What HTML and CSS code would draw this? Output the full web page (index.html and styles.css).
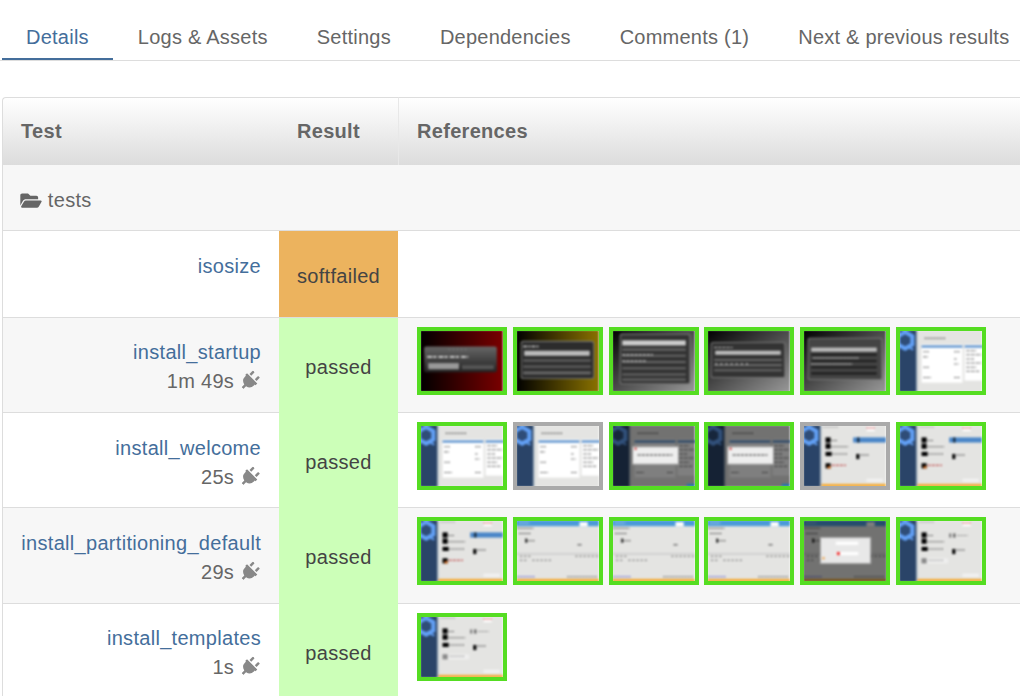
FILE: index.html
```html
<!DOCTYPE html>
<html lang="en">
<head>
    <meta charset="UTF-8">
    <title>Test details</title>
    <link rel="stylesheet" href="styles.css">
</head>
<body>

    <!-- thumbnails, all drawn once and reused -->
    <svg class="defs" width="0" height="0">
        <defs>
            <linearGradient id="g-red"><stop offset="0" stop-color="#000"/><stop offset="1" stop-color="#7c0000"/></linearGradient>
            <linearGradient id="g-yellow"><stop offset="0" stop-color="#000"/><stop offset="1" stop-color="#8c7400"/></linearGradient>
            <linearGradient id="g-grey" x2="1" y2="1"><stop offset="0" stop-color="#000"/><stop offset="1" stop-color="#9a9a9a"/></linearGradient>
            <linearGradient id="g-panel" x2="0" y2="1"><stop offset="0" stop-color="#666"/><stop offset="1" stop-color="#222"/></linearGradient>

            <g id="sidebar">
                <rect width="82" height="60" fill="#e4e4e2"/>
                <rect width="17" height="60" fill="#2a4468"/>
                <rect x="17" width="1" height="60" fill="#9ab"/>
                <path d="M6 2l7 4v8l-7 4-7-4v-8z" fill="#2f4d78" stroke="#62a0f5" stroke-width="4"/>
                <path d="M10 17l4 2" stroke="#62a0f5" stroke-width="2"/>
                <rect x="81" width="1" height="60" fill="#fff"/>
            </g>

            <symbol id="t-red" viewBox="0 0 82 60" preserveAspectRatio="none">
                <rect width="82" height="60" fill="url(#g-red)"/>
                <rect x="4" y="16" width="71" height="25" rx="2" fill="url(#g-panel)"/>
                <path d="M7 26h40" stroke="#ddd" stroke-width="1.500" stroke-dasharray="5 1 3 2"/>
                <path d="M28 19h20" stroke="#888" stroke-dasharray="1 3"/>
                <rect x="8" y="32" width="30" height="6" fill="#999"/>
                <rect x="41" y="34" width="31" height="4" fill="#555"/>
                <rect x="81" width="1" height="60" fill="#fff"/>
            </symbol>

            <symbol id="t-yellow" viewBox="0 0 82 60" preserveAspectRatio="none">
                <rect width="82" height="60" fill="url(#g-yellow)"/>
                <rect x="5" y="11" width="71" height="36" rx="2" fill="#2c2c2c" stroke="#777"/>
                <path d="M7 16h16" stroke="#ccc" stroke-width="1.500" stroke-dasharray="4 1 2 1"/>
                <rect x="8" y="20" width="64" height="5" fill="#bbb"/>
                <rect x="7" y="28" width="66" height="3" fill="#555"/>
                <rect x="7" y="34" width="66" height="3" fill="#555"/>
                <rect x="7" y="40" width="66" height="3" fill="#666"/>
                <rect x="81" width="1" height="60" fill="#fff"/>
            </symbol>

            <symbol id="t-menu" viewBox="0 0 82 60" preserveAspectRatio="none">
                <rect width="82" height="60" fill="url(#g-grey)"/>
                <rect x="8" y="4" width="68" height="48" rx="2" fill="#333" stroke="#777"/>
                <rect x="10" y="10" width="62" height="5" fill="#ccc"/>
                <path d="M10 19h62M10 25h62M10 31h62M10 37h62M10 43h62M10 48h62" stroke="#666" stroke-width="2"/>
                <path d="M10 24h30M10 30h24" stroke="#ddd" stroke-dasharray="3 1"/>
                <rect x="81" width="1" height="60" fill="#fff"/>
            </symbol>

            <symbol id="t-menu2" viewBox="0 0 82 60" preserveAspectRatio="none">
                <rect width="82" height="60" fill="url(#g-grey)"/>
                <rect x="4" y="12" width="72" height="34" rx="2" fill="#333" stroke="#777"/>
                <path d="M7 17h18" stroke="#bbb" stroke-dasharray="3 1"/>
                <rect x="8" y="20" width="64" height="4" fill="#bbb"/>
                <path d="M7 29h66M7 34h66M7 39h66" stroke="#666" stroke-width="2"/>
                <path d="M8 33h34" stroke="#eee" stroke-dasharray="2 3"/>
                <rect x="81" width="1" height="60" fill="#fff"/>
            </symbol>

            <symbol id="t-menu3" viewBox="0 0 82 60" preserveAspectRatio="none">
                <rect width="82" height="60" fill="url(#g-grey)"/>
                <rect x="5" y="8" width="72" height="40" rx="2" fill="#444" stroke="#777"/>
                <rect x="8" y="17" width="64" height="4" fill="#bbb"/>
                <path d="M8 24h64M8 30h64M8 36h64M8 42h64" stroke="#222" stroke-width="2.500"/>
                <path d="M10 27h44M8 33h40" stroke="#ddd" stroke-dasharray="2 1"/>
                <rect x="81" width="1" height="60" fill="#fff"/>
            </symbol>

            <g id="packages">
                <rect x="22" y="14" width="40" height="37" fill="#fff"/>
                <rect x="64" y="14" width="18" height="35" fill="#fff"/>
                <rect x="22" y="15" width="40" height="2" fill="#4a86c8"/>
                <rect x="64" y="15" width="18" height="2" fill="#4a86c8"/>
                <path d="M25 8h20" stroke="#444" stroke-dasharray="2 1"/>
                <path d="M24 21h6M24 26h4M24 36h5M24 46h7M54 21h6M54 28h3M54 33h4M54 46h6" stroke="#555" stroke-dasharray="2 1"/>
                <path d="M66 20h10M66 24h14M66 28h8M66 32h14M66 36h10M66 40h12" stroke="#444" stroke-dasharray="2 1 1 1"/>
            </g>
            <symbol id="t-packages" viewBox="0 0 82 60" preserveAspectRatio="none">
                <use href="#sidebar"/><use href="#packages"/>
            </symbol>

            <symbol id="t-packages-dim" viewBox="0 0 82 60" preserveAspectRatio="none">
                <use href="#sidebar"/><use href="#packages"/>
                <rect width="81" height="60" fill="#000" opacity=".5"/>
                <rect x="20" y="21" width="45" height="17" fill="#eee" stroke="#999"/>
                <path d="M25 29h34" stroke="#333" stroke-dasharray="3 1"/>
                <rect x="22" y="22" width="2" height="2" fill="#c33"/>
                <rect x="73" y="57" width="8" height="3" fill="#27a"/>
            </symbol>

            <g id="overview">
                <use href="#sidebar"/>
                <path d="M20 2h14" stroke="#999" stroke-dasharray="2 1"/>
                <rect x="62" y="1" width="8" height="5" fill="#fff"/>
                <path d="M62 3h8" stroke="#b33" stroke-dasharray="2 1"/>
                <rect x="22" y="12" width="5" height="5"/>
                <rect x="22" y="18" width="5" height="5"/>
                <rect x="22" y="26" width="6" height="4"/>
                <path d="M28 15h6M28 21h16M29 28h14" stroke="#555" stroke-dasharray="2 1"/>
                <rect x="52" y="28" width="3" height="5"/>
                <path d="M56 29h9" stroke="#444" stroke-dasharray="2 1"/>
                <rect x="18" y="57" width="63" height="3" fill="#f5ab35"/>
                <rect x="62" y="52" width="16" height="3" fill="#f2f2f2"/>
            </g>
            <symbol id="t-overview" viewBox="0 0 82 60" preserveAspectRatio="none">
                <use href="#overview"/>
                <rect x="49" y="12" width="32" height="5" fill="#4a86c8"/>
                <rect x="53" y="12" width="2" height="5" fill="#123"/>
                <rect x="22" y="37" width="5" height="5"/>
                <rect x="24" y="40" width="3" height="2" fill="#e72"/>
                <path d="M28 39h14" stroke="#b33" stroke-dasharray="3 1"/>
            </symbol>
            <symbol id="t-overview2" viewBox="0 0 82 60" preserveAspectRatio="none">
                <use href="#overview"/>
                <rect x="49" y="13" width="2" height="4" fill="#777"/>
                <rect x="53" y="13" width="2" height="4" fill="#555"/>
                <path d="M57 15h10" stroke="#888" stroke-dasharray="2 1"/>
                <rect x="22" y="37" width="26" height="5" fill="#eee"/>
                <rect x="22" y="37" width="5" height="5" fill="#888"/>
                <path d="M29 39h14" stroke="#999" stroke-dasharray="2 1"/>
            </symbol>

            <g id="partition">
                <rect width="82" height="60" fill="#e4e4e2"/>
                <rect width="82" height="6" fill="#4a9ad8"/>
                <rect x="62" y="2" width="8" height="4" fill="#fff"/>
                <path d="M3 3h10" stroke="#cde" stroke-dasharray="2 1"/>
                <path d="M1 8h16M3 13h11M10 20h8" stroke="#444" stroke-dasharray="2 1"/>
                <rect x="9" y="18" width="2" height="4" fill="#222"/>
                <path d="M60 24h4" stroke="#444"/>
                <rect y="32" width="81" height="1.500" fill="#ccc"/>
                <path d="M4 35h10M4 39h8M16 39h20M58 35h22" stroke="#666" stroke-dasharray="2 2"/>
                <path d="M1 55h17" stroke="#55c" stroke-dasharray="2 1"/>
                <path d="M50 55h30" stroke="#666" stroke-dasharray="2 1"/>
                <rect y="57" width="81" height="3" fill="#f5ab35"/>
                <rect x="81" width="1" height="60" fill="#fff"/>
            </g>
            <symbol id="t-partition" viewBox="0 0 82 60" preserveAspectRatio="none">
                <use href="#partition"/>
            </symbol>
            <symbol id="t-partition-dim" viewBox="0 0 82 60" preserveAspectRatio="none">
                <use href="#partition"/>
                <rect width="82" height="60" fill="#000" opacity=".5"/>
                <rect x="17" y="17" width="49" height="25" fill="#e8e8e8" stroke="#aaa"/>
                <rect x="32" y="21" width="22" height="3" fill="#fff"/>
                <rect x="32" y="31" width="22" height="3" fill="#fff"/>
                <rect x="33" y="31" width="3" height="3" fill="#e33"/>
                <rect x="19" y="36" width="2" height="2" fill="#e93"/>
            </symbol>

            <path id="plug" d="M320,32a32,32,0,0,0-64,0v96h64Zm48,128H16A16,16,0,0,0,0,176v32a16,16,0,0,0,16,16H32v32A160.070,160.070,0,0,0,160,412.800V512h64V412.800A160.070,160.070,0,0,0,352,256V224h16a16,16,0,0,0,16-16V176A16,16,0,0,0,368,160ZM128,32a32,32,0,0,0-64,0v96h64Z"/>
        </defs>
    </svg>

    <nav class="tabs">
        <a class="tab tab-active">Details</a>
        <a class="tab">Logs &amp; Assets</a>
        <a class="tab">Settings</a>
        <a class="tab">Dependencies</a>
        <a class="tab">Comments (1)</a>
        <a class="tab">Next &amp; previous results</a>
    </nav>

    <table class="results">
        <thead>
            <tr>
                <th class="col-test">Test</th>
                <th class="col-result">Result</th>
                <th class="col-refs">References</th>
            </tr>
        </thead>
        <tbody>
            <tr class="row-group">
                <td colspan="3">
                    <svg class="folder" viewBox="0 0 576 512"><path d="M572.694 292.093L500.27 416.248A63.997 63.997 0 0 1 444.989 448H45.025c-18.523 0-30.064-20.093-20.731-36.093l72.424-124.155A64 64 0 0 1 152 256h399.964c18.523 0 30.064 20.093 20.73 36.093zM152 224h328v-48c0-26.51-21.49-48-48-48H272l-64-64H48C21.49 64 0 85.49 0 112v278.046l69.077-118.418C86.214 242.25 117.989 224 152 224z"/></svg>
                    tests
                </td>
            </tr>
            <tr class="row-short">
                <td class="name"><a>isosize</a></td>
                <td class="result softfailed">softfailed</td>
                <td class="refs"></td>
            </tr>
            <tr class="row-odd row-first">
                <td class="name">
                    <a>install_startup</a>
                    <div class="time">1m 49s <svg class="plug" viewBox="0 0 384 512"><use href="#plug"/></svg></div>
                </td>
                <td class="result passed">passed</td>
                <td class="refs">
                    <div class="thumbs">
                        <div class="thumb"><svg><use href="#t-red"/></svg></div>
                        <div class="thumb"><svg><use href="#t-yellow"/></svg></div>
                        <div class="thumb"><svg><use href="#t-menu"/></svg></div>
                        <div class="thumb"><svg><use href="#t-menu2"/></svg></div>
                        <div class="thumb"><svg><use href="#t-menu3"/></svg></div>
                        <div class="thumb"><svg><use href="#t-packages"/></svg></div>
                    </div>
                </td>
            </tr>
            <tr>
                <td class="name">
                    <a>install_welcome</a>
                    <div class="time">25s <svg class="plug" viewBox="0 0 384 512"><use href="#plug"/></svg></div>
                </td>
                <td class="result passed">passed</td>
                <td class="refs">
                    <div class="thumbs">
                        <div class="thumb"><svg><use href="#t-packages"/></svg></div>
                        <div class="thumb thumb-grey"><svg><use href="#t-packages"/></svg></div>
                        <div class="thumb"><svg><use href="#t-packages-dim"/></svg></div>
                        <div class="thumb"><svg><use href="#t-packages-dim"/></svg></div>
                        <div class="thumb thumb-grey"><svg><use href="#t-overview"/></svg></div>
                        <div class="thumb"><svg><use href="#t-overview"/></svg></div>
                    </div>
                </td>
            </tr>
            <tr class="row-odd row-tall">
                <td class="name">
                    <a>install_partitioning_default</a>
                    <div class="time">29s <svg class="plug" viewBox="0 0 384 512"><use href="#plug"/></svg></div>
                </td>
                <td class="result passed">passed</td>
                <td class="refs">
                    <div class="thumbs">
                        <div class="thumb"><svg><use href="#t-overview"/></svg></div>
                        <div class="thumb"><svg><use href="#t-partition"/></svg></div>
                        <div class="thumb"><svg><use href="#t-partition"/></svg></div>
                        <div class="thumb"><svg><use href="#t-partition"/></svg></div>
                        <div class="thumb"><svg><use href="#t-partition-dim"/></svg></div>
                        <div class="thumb"><svg><use href="#t-overview2"/></svg></div>
                    </div>
                </td>
            </tr>
            <tr class="row-last">
                <td class="name">
                    <a>install_templates</a>
                    <div class="time">1s <svg class="plug" viewBox="0 0 384 512"><use href="#plug"/></svg></div>
                </td>
                <td class="result passed">passed</td>
                <td class="refs">
                    <div class="thumbs">
                        <div class="thumb"><svg><use href="#t-overview2"/></svg></div>
                    </div>
                </td>
            </tr>
        </tbody>
    </table>

</body>
</html>
```

FILE: styles.css
```css
@charset "utf-8";

* { box-sizing: border-box; margin: 0; padding: 0; }

html, body { height: 100%; overflow: hidden; }

body {
    background: #fff;
    color: #555;
    font-family: "Liberation Sans", Arial, sans-serif;
    font-size: 20px;
    letter-spacing: .3px;
    line-height: 1.42857;
}

a { color: #446e9b; }

.defs { position: absolute; }

/* tabs */
.tabs {
    display: flex;
    gap: 1px;
    height: 61px;
    padding: 23px 0 0 2px;
    border-bottom: 1px solid #ddd;
    letter-spacing: .24px;
    white-space: nowrap;
    overflow: hidden;
}

.tab {
    display: block;
    flex: none;
    height: 38px;
    padding: 0 24px;
    color: #666;
}

.tab-active {
    color: #446e9b;
    border-bottom: 3px solid #446e9b;
}

/* table */
.results {
    width: 1018px;
    margin: 36px 0 0 2px;
    border-collapse: separate;
    border-spacing: 0;
    table-layout: fixed;
}

.results th {
    height: 68px;
    padding: 0 18px;
    background: linear-gradient(#fff, #dcdcdc);
    border-top: 1px solid #ddd;
    color: #666;
    font-weight: bold;
    text-align: left;
}

.col-test { width: 277px; border-left: 1px solid #ddd; border-top-left-radius: 4px; }
.col-result { width: 119px; }
.col-refs { border-left: 1px solid #e8e8e8; }

.results tbody td:first-child { border-left: 1px solid #ddd; }

tbody tr td { height: 95px; border-bottom: 1px solid #ddd; }
.row-odd td { background: #f7f7f7; }

.results .row-group td {
    height: 66px;
    padding: 6px 17px 0;
    background: #f7f7f7;
    color: #666;
}

.results .row-short td { height: 87px; }
.results .row-tall td { height: 96px; }
.results .row-last td { height: 97px; border-bottom: 0; }

.folder {
    width: 22px;
    height: 19px;
    fill: #666;
    vertical-align: -3px;
}

.name {
    padding: 21px 18px 0 0;
    text-align: right;
    vertical-align: top;
}

.results .row-first .name,
.results .row-last .name { padding-top: 20px; }

.time { color: #666; }

.plug {
    width: 15px;
    height: 20px;
    margin: 0 4px 0 2px;
    fill: #888;
    transform: rotate(45deg);
    vertical-align: -3px;
}

.result {
    padding-top: 5px;
    color: #444;
    text-align: center;
}

.row-tall .result { padding-top: 3px; }
.row-last .result { padding-top: 1px; }

.results td.softfailed { background: #ecb35e; }
.results td.passed { background: #ccffb8; border-bottom-color: #ccffb8; }

.refs {
    padding: 9px 0 0 19px;
    vertical-align: top;
    overflow: hidden;
}

.thumbs { display: flex; gap: 5.8px; }

.thumb {
    flex: none;
    width: 90px;
    height: 67.500px;
    border: 4px solid #55dd22;
    background: #fff;
    overflow: hidden;
}

.thumb-grey { border-color: #aaa; }

/* a little bigger than the frame, or the blur fades out at the edges */
.thumb svg {
    display: block;
    width: 84px;
    height: 62px;
    margin: -1px;
    filter: blur(1px);
}
```
